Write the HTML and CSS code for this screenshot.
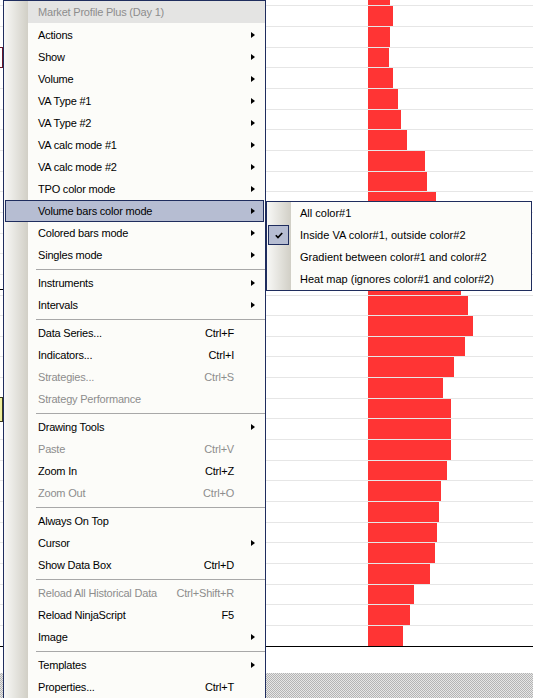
FILE: index.html
```html
<!DOCTYPE html>
<html>
<head>
<meta charset="utf-8">
<link rel="stylesheet" href="styles.css">
</head>
<body>
<div class="screen">
  <div class="chart">
    <div class="row first"><div class="bar" style="width:22px"></div></div>
    <div class="row"><div class="bar" style="width:25px"></div></div>
    <div class="row"><div class="bar" style="width:22px"></div></div>
    <div class="row"><div class="bar" style="width:21px"></div></div>
    <div class="row"><div class="bar" style="width:25px"></div></div>
    <div class="row"><div class="bar" style="width:30px"></div></div>
    <div class="row"><div class="bar" style="width:33px"></div></div>
    <div class="row"><div class="bar" style="width:39px"></div></div>
    <div class="row"><div class="bar" style="width:57px"></div></div>
    <div class="row"><div class="bar" style="width:59px"></div></div>
    <div class="row"><div class="bar" style="width:68px"></div></div>
    <div class="row"><div class="bar" style="width:77px"></div></div>
    <div class="row"><div class="bar" style="width:82px"></div></div>
    <div class="row"><div class="bar" style="width:87px"></div></div>
    <div class="row"><div class="bar" style="width:93px"></div></div>
    <div class="row"><div class="bar" style="width:100px"></div></div>
    <div class="row"><div class="bar" style="width:105px"></div></div>
    <div class="row"><div class="bar" style="width:97px"></div></div>
    <div class="row"><div class="bar" style="width:86px"></div></div>
    <div class="row"><div class="bar" style="width:75px"></div></div>
    <div class="row"><div class="bar" style="width:83px"></div></div>
    <div class="row"><div class="bar" style="width:83px"></div></div>
    <div class="row"><div class="bar" style="width:83px"></div></div>
    <div class="row"><div class="bar" style="width:79px"></div></div>
    <div class="row"><div class="bar" style="width:73px"></div></div>
    <div class="row"><div class="bar" style="width:71px"></div></div>
    <div class="row"><div class="bar" style="width:69px"></div></div>
    <div class="row"><div class="bar" style="width:67px"></div></div>
    <div class="row"><div class="bar" style="width:62px"></div></div>
    <div class="row"><div class="bar" style="width:46px"></div></div>
    <div class="row"><div class="bar" style="width:42px"></div></div>
    <div class="row"><div class="bar" style="width:35px"></div></div>
    <div class="baseline"></div>
    <div class="blank"></div>
    <div class="hatch"></div>
    <div class="mark mark-red"></div>
    <div class="mark mark-yellow"></div>
    <div class="priceline"></div>
  </div>

  <div class="menu">
    <div class="menu-title">Market Profile Plus (Day 1)</div>
    <div class="item"><span>Actions</span><span></span><span class="arrow"></span></div>
    <div class="item"><span>Show</span><span></span><span class="arrow"></span></div>
    <div class="item"><span>Volume</span><span></span><span class="arrow"></span></div>
    <div class="item"><span>VA Type #1</span><span></span><span class="arrow"></span></div>
    <div class="item"><span>VA Type #2</span><span></span><span class="arrow"></span></div>
    <div class="item"><span>VA calc mode #1</span><span></span><span class="arrow"></span></div>
    <div class="item"><span>VA calc mode #2</span><span></span><span class="arrow"></span></div>
    <div class="item"><span>TPO color mode</span><span></span><span class="arrow"></span></div>
    <div class="item hot"><span>Volume bars color mode</span><span></span><span class="arrow"></span></div>
    <div class="item"><span>Colored bars mode</span><span></span><span class="arrow"></span></div>
    <div class="item"><span>Singles mode</span><span></span><span class="arrow"></span></div>
    <div class="sep"></div>
    <div class="item"><span>Instruments</span><span></span><span class="arrow"></span></div>
    <div class="item"><span>Intervals</span><span></span><span class="arrow"></span></div>
    <div class="sep"></div>
    <div class="item"><span>Data Series...</span><span class="key">Ctrl+F</span><span></span></div>
    <div class="item"><span>Indicators...</span><span class="key">Ctrl+I</span><span></span></div>
    <div class="item dis"><span>Strategies...</span><span class="key">Ctrl+S</span><span></span></div>
    <div class="item dis"><span>Strategy Performance</span><span></span><span></span></div>
    <div class="sep"></div>
    <div class="item"><span>Drawing Tools</span><span></span><span class="arrow"></span></div>
    <div class="item dis"><span>Paste</span><span class="key">Ctrl+V</span><span></span></div>
    <div class="item"><span>Zoom In</span><span class="key">Ctrl+Z</span><span></span></div>
    <div class="item dis"><span>Zoom Out</span><span class="key">Ctrl+O</span><span></span></div>
    <div class="sep"></div>
    <div class="item"><span>Always On Top</span><span></span><span></span></div>
    <div class="item"><span>Cursor</span><span></span><span class="arrow"></span></div>
    <div class="item"><span>Show Data Box</span><span class="key">Ctrl+D</span><span></span></div>
    <div class="sep"></div>
    <div class="item dis"><span>Reload All Historical Data</span><span class="key">Ctrl+Shift+R</span><span></span></div>
    <div class="item"><span>Reload NinjaScript</span><span class="key">F5</span><span></span></div>
    <div class="item"><span>Image</span><span></span><span class="arrow"></span></div>
    <div class="sep"></div>
    <div class="item"><span>Templates</span><span></span><span class="arrow"></span></div>
    <div class="item"><span>Properties...</span><span class="key">Ctrl+T</span><span></span></div>
  </div>

  <div class="submenu">
    <div class="sitem"><span class="check-cell"></span><span class="slabel">All color#1</span></div>
    <div class="sitem checked"><span class="check-cell"><svg width="8" height="7" viewBox="0 0 8 7"><polyline points="0.8,3.2 3,5.6 7.2,1" fill="none" stroke="#000" stroke-width="1.7"/></svg></span><span class="slabel">Inside VA color#1, outside color#2</span></div>
    <div class="sitem"><span class="check-cell"></span><span class="slabel">Gradient between color#1 and color#2</span></div>
    <div class="sitem"><span class="check-cell"></span><span class="slabel">Heat map (ignores color#1 and color#2)</span></div>
  </div>
</div>
</body>
</html>
```

FILE: styles.css
```css
html, body {
  margin: 0;
  padding: 0;
  background: #ffffff;
}

.screen {
  position: relative;
  width: 533px;
  height: 698px;
  overflow: hidden;
  font-family: "Liberation Sans", Arial, sans-serif;
  font-size: 11px;
  letter-spacing: -0.2px;
  color: #000;
}

/* ---------- chart ---------- */
.chart {
  position: relative;
  display: flex;
  flex-direction: column;
  height: 698px;
  background: #ffffff;
}

.row {
  display: flex;
  height: 20.67px;
  flex: none;
  box-sizing: border-box;
  border-top: 1px solid #e6e6e6;
}

.row.first {
  height: 5.33px;
  border-top: 0;
}

.bar {
  margin-left: 368px;
  height: 100%;
  background: #ff3434;
}

.baseline {
  flex: none;
  height: 1px;
  background: #000;
}

.blank {
  flex: none;
  height: 26px;
}

.hatch {
  flex: 1;
  background-color: #cfcfcf;
  background-image: repeating-conic-gradient(#b4b4b4 0 25%, #e6e6e6 0 50%);
  background-size: 2px 2px;
}

.mark {
  position: absolute;
  box-sizing: border-box;
}

.mark-red {
  left: -10px;
  top: 47px;
  width: 13px;
  height: 21px;
  border: 1px solid #6a1a2c;
  background: #ffffff;
}

.mark-yellow {
  left: -10px;
  top: 397px;
  width: 13px;
  height: 25px;
  border: 1px solid #3a3a20;
  background: #eeee9c;
}

.priceline {
  position: absolute;
  left: 0;
  top: 289px;
  width: 266px;
  height: 1px;
  background: #000;
}

/* ---------- context menu ---------- */
.menu {
  position: absolute;
  left: 3px;
  top: 0;
  width: 263px;
  box-sizing: border-box;
  border: 1px solid #1f2d5e;
  background:
    linear-gradient(to right, #f8f8f6, #d1cfc6) 0 0 / 24px 100% no-repeat,
    #fcfcf9;
}

.menu-title {
  margin-left: 24px;
  margin-bottom: 1px;
  height: 22px;
  line-height: 22px;
  padding-left: 10px;
  background: #e4e4e3;
  color: #8d8d8d;
}

.item {
  display: grid;
  grid-template-columns: 1fr auto 29px;
  align-items: center;
  height: 22px;
  margin: 0 1px;
  padding-left: 32px;
  box-sizing: border-box;
  border: 1px solid transparent;
  white-space: nowrap;
}

.item.dis {
  color: #8d8d8d;
}

.item.hot {
  background: #b6bdd2;
  border-color: #1f2d5e;
}

.key {
  text-align: right;
}

.arrow {
  width: 0;
  height: 0;
  margin-left: 17px;
  border-left: 4px solid #000;
  border-top: 3.5px solid transparent;
  border-bottom: 3.5px solid transparent;
}

.sep {
  display: flex;
  align-items: center;
  height: 6px;
  margin-left: 32px;
}

.sep::before {
  content: "";
  flex: 1;
  height: 1px;
  background: #a8a8a8;
}

/* ---------- submenu ---------- */
.submenu {
  position: absolute;
  left: 266px;
  top: 201px;
  width: 266px;
  box-sizing: border-box;
  border: 1px solid #1f2d5e;
  letter-spacing: 0;
  background:
    linear-gradient(to right, #f8f8f6, #d1cfc6) 0 0 / 24px 100% no-repeat,
    #fcfcf9;
}

.sitem {
  display: flex;
  align-items: center;
  height: 22px;
  white-space: nowrap;
}

.check-cell {
  flex: none;
  display: flex;
  align-items: center;
  justify-content: center;
  width: 21px;
  height: 20px;
  margin-left: 1px;
  box-sizing: border-box;
}

.sitem.checked .check-cell {
  background: #b6bdd2;
  border: 1px solid #1f2d5e;
}

.slabel {
  margin-left: 11px;
}
```
